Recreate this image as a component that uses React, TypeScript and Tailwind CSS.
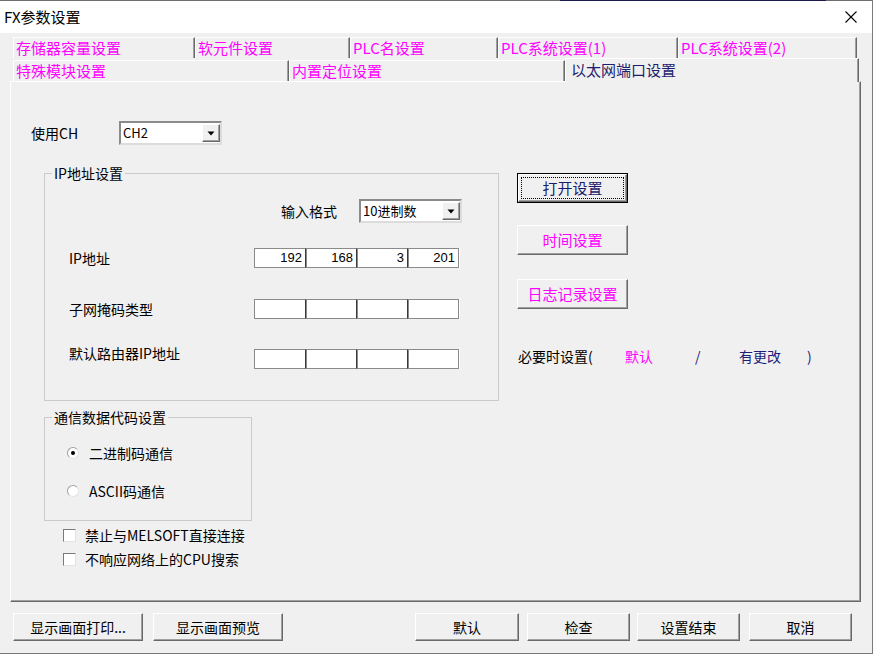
import React from 'react';

const FONT = "font-['Noto_Sans_CJK_SC','Noto_Sans',sans-serif]";

const ROW1 = [
  { label: '存储器容量设置', w: 'w-[182px]' },
  { label: '软元件设置', w: 'w-[155px]' },
  { label: 'PLC名设置', w: 'w-[148px]' },
  { label: 'PLC系统设置(1)', w: 'w-[180px]' },
  { label: 'PLC系统设置(2)', w: 'w-[179px]' },
];

const ROW2 = [
  { label: '特殊模块设置', w: 'w-[276px]' },
  { label: '内置定位设置', w: 'w-[276px]' },
];

const raised =
  'border border-t-white border-l-white border-r-[#696969] border-b-[#696969] shadow-[inset_-1px_-1px_0_#a0a0a0]';

function Tab({ label, w }: { label: string; w: string }) {
  return (
    <div
      className={`${w} h-[21px] shrink-0 border-t border-l border-t-[#fdfdfd] border-l-[#fdfdfd] border-r border-r-[#696969] shadow-[inset_-1px_0_0_#a0a0a0] pl-[2px] text-[15px] leading-[20px] text-[#ff00ff] whitespace-nowrap`}
    >
      {label}
    </div>
  );
}

function Combo({ value, w }: { value: string; w: string }) {
  return (
    <div
      className={`${w} h-[24px] flex items-center bg-white border-2 border-t-[#8a8a8a] border-l-[#8a8a8a] border-r-[#dcdcdc] border-b-[#dcdcdc]`}
    >
      <span className="flex-1 pl-[2px] text-[13px] leading-[18px] text-black">{value}</span>
      <div className={`w-[18px] h-[18px] flex items-center justify-center bg-[#f0f0f0] ${raised}`}>
        <svg width="8" height="5" viewBox="0 0 8 5">
          <path d="M0.5 0.5h7L4 4.5z" fill="#000" />
        </svg>
      </div>
    </div>
  );
}

function IpBox({ values }: { values: string[] }) {
  return (
    <div className="flex w-[206px] h-[20px] bg-white">
      {values.map((v, i) => (
        <div
          key={i}
          className={`${i === 0 ? 'w-[52px]' : 'w-[51px]'} h-full border border-[#8a8a8a] ${i < 3 ? 'border-r-[#3a3a3a]' : ''} text-right pr-[3px] text-[13px] leading-[18px] font-['Liberation_Sans',sans-serif] text-black`}
        >
          {v}
        </div>
      ))}
    </div>
  );
}

function Radio({ checked }: { checked?: boolean }) {
  return (
    <span className="w-[12px] h-[12px] shrink-0 rounded-full border border-[#a0a0a0] border-r-[#e3e3e3] border-b-[#e3e3e3] bg-white flex items-center justify-center">
      {checked && <span className="w-[4px] h-[4px] rounded-full bg-black" />}
    </span>
  );
}

function Check() {
  return (
    <span className="w-[13px] h-[13px] shrink-0 bg-white border border-t-[#7a7a7a] border-l-[#7a7a7a] border-r-[#e3e3e3] border-b-[#e3e3e3]" />
  );
}

function Btn({ label, w, color = 'text-black', size = 'text-[14px]', h = 'h-[28px]' }: { label: string; w: string; color?: string; size?: string; h?: string }) {
  return (
    <button
      type="button"
      className={`${w} ${h} shrink-0 flex items-center justify-center bg-[#f0f0f0] ${raised} ${size} ${color}`}
    >
      {label}
    </button>
  );
}

export default function App() {
  return (
    <div className={`w-[876px] h-[655px] bg-white overflow-hidden ${FONT} text-black`}>
      <div className="w-[873px] h-[654px] flex flex-col border-r border-b border-[#7a7a7a] bg-[#f0f0f0]">
        <div className="h-px shrink-0 flex">
          <div className="w-[560px] bg-[#6e6e6e]" />
          <div className="w-[266px] bg-[#1b1b4d]" />
          <div className="flex-1 bg-[#6e6e6e]" />
        </div>

        {/* title bar */}
        <div className="h-[32px] shrink-0 bg-white flex items-center justify-between pl-[4px] pr-[15px]">
          <span className="text-[15px] leading-[20px]">FX参数设置</span>
          <svg width="12" height="12" viewBox="0 0 12 12">
            <path d="M0.5 0.5L11.5 11.5M11.5 0.5L0.5 11.5" stroke="#000" strokeWidth="1.1" />
          </svg>
        </div>

        <div className="flex-1 flex flex-col pl-[10px] pt-[4px]">
          {/* tabs */}
          <div className="flex ml-[3px]">
            {ROW1.map((t) => (
              <Tab key={t.label} {...t} />
            ))}
          </div>
          <div className="flex items-end h-[23px] ml-[3px]">
            {ROW2.map((t) => (
              <Tab key={t.label} {...t} />
            ))}
            <div className="relative z-10 w-[294px] h-[24px] -mb-px shrink-0 bg-[#f0f0f0] border-t border-l border-t-white border-l-white border-r border-r-[#696969] shadow-[inset_-1px_0_0_#a0a0a0] pl-[5px] text-[15px] leading-[22px] text-[#1e1e6e]">
              以太网端口设置
            </div>
          </div>

          {/* panel */}
          <div className={`w-[851px] h-[521px] shrink-0 flex flex-col ${raised}`}>
            <div className="flex items-center h-[24px] mt-[39px] pl-[20px]">
              <span className="w-[88px] text-[14px]">使用CH</span>
              <Combo value="CH2" w="w-[103px]" />
            </div>

            <div className="flex items-start mt-[18px] pl-[33px]">
              <div className="flex flex-col w-[455px]">
                <fieldset className="border border-[#cacaca] pb-[31px]">
                  <legend className="ml-[7px] px-[2px] text-[14px] leading-[20px]">IP地址设置</legend>
                  <div className="flex items-center h-[24px] mt-[16px] pl-[236px]">
                    <span className="w-[78px] text-[14px]">输入格式</span>
                    <Combo value="10进制数" w="w-[103px]" />
                  </div>
                  <div className="flex items-center h-[20px] mt-[25px]">
                    <span className="w-[209px] pl-[24px] text-[14px]">IP地址</span>
                    <IpBox values={['192', '168', '3', '201']} />
                  </div>
                  <div className="flex items-center h-[20px] mt-[31px]">
                    <span className="w-[209px] pl-[24px] text-[14px]">子网掩码类型</span>
                    <IpBox values={['', '', '', '']} />
                  </div>
                  <div className="flex items-center h-[20px] mt-[30px]">
                    <span className="w-[209px] pl-[24px] mb-[12px] text-[14px]">默认路由器IP地址</span>
                    <IpBox values={['', '', '', '']} />
                  </div>
                </fieldset>

                <fieldset className="w-[208px] mt-[6px] border border-[#cacaca] pb-[19px]">
                  <legend className="ml-[7px] px-[2px] text-[14px] leading-[20px]">通信数据代码设置</legend>
                  <div className="flex items-center h-[20px] mt-[16px] pl-[22px] gap-[10px] text-[14px]">
                    <Radio checked />
                    <span>二进制码通信</span>
                  </div>
                  <div className="flex items-center h-[20px] mt-[18px] pl-[22px] gap-[10px] text-[14px]">
                    <Radio />
                    <span>ASCII码通信</span>
                  </div>
                </fieldset>

                <div className="flex flex-col mt-[2px] pl-[19px] text-[14px]">
                  <div className="flex items-center h-[24px] gap-[9px]">
                    <Check />
                    <span>禁止与MELSOFT直接连接</span>
                  </div>
                  <div className="flex items-center h-[24px] gap-[9px]">
                    <Check />
                    <span>不响应网络上的CPU搜索</span>
                  </div>
                </div>
              </div>

              <div className="flex flex-col ml-[18px] mt-[10px]">
                <button type="button" className="w-[111px] h-[30px] border border-black bg-[#f0f0f0]">
                  <div className={`h-full p-[2px] ${raised}`}>
                    <div className="h-full border border-dotted border-black flex items-center justify-center text-[15px] text-[#1a1a6e]">
                      打开设置
                    </div>
                  </div>
                </button>
                <div className="mt-[22px]">
                  <Btn label="时间设置" w="w-[111px]" h="h-[30px]" size="text-[15px]" color="text-[#ff00ff]" />
                </div>
                <div className="mt-[24px]">
                  <Btn label="日志记录设置" w="w-[111px]" h="h-[30px]" size="text-[15px]" color="text-[#ff00ff]" />
                </div>
                <div className="flex items-center h-[20px] mt-[37px] pl-px text-[14px] whitespace-nowrap">
                  <span className="w-[107px]">必要时设置(</span>
                  <span className="w-[70px] text-[#ff00ff]">默认</span>
                  <span className="w-[44px] text-[#1e1e78]">/</span>
                  <span className="w-[68px] text-[#1e1e78]">有更改</span>
                  <span className="text-[#1e1e78]">)</span>
                </div>
              </div>
            </div>
          </div>

          {/* footer */}
          <div className="flex mt-[11px]">
            <div className="ml-[3px]">
              <Btn label="显示画面打印..." w="w-[130px]" />
            </div>
            <div className="ml-[10px]">
              <Btn label="显示画面预览" w="w-[130px]" />
            </div>
            <div className="ml-[132px]">
              <Btn label="默认" w="w-[104px]" />
            </div>
            <div className="ml-[8px]">
              <Btn label="检查" w="w-[103px]" />
            </div>
            <div className="ml-[7px]">
              <Btn label="设置结束" w="w-[103px]" />
            </div>
            <div className="ml-[9px]">
              <Btn label="取消" w="w-[103px]" />
            </div>
          </div>
        </div>
      </div>
    </div>
  );
}
